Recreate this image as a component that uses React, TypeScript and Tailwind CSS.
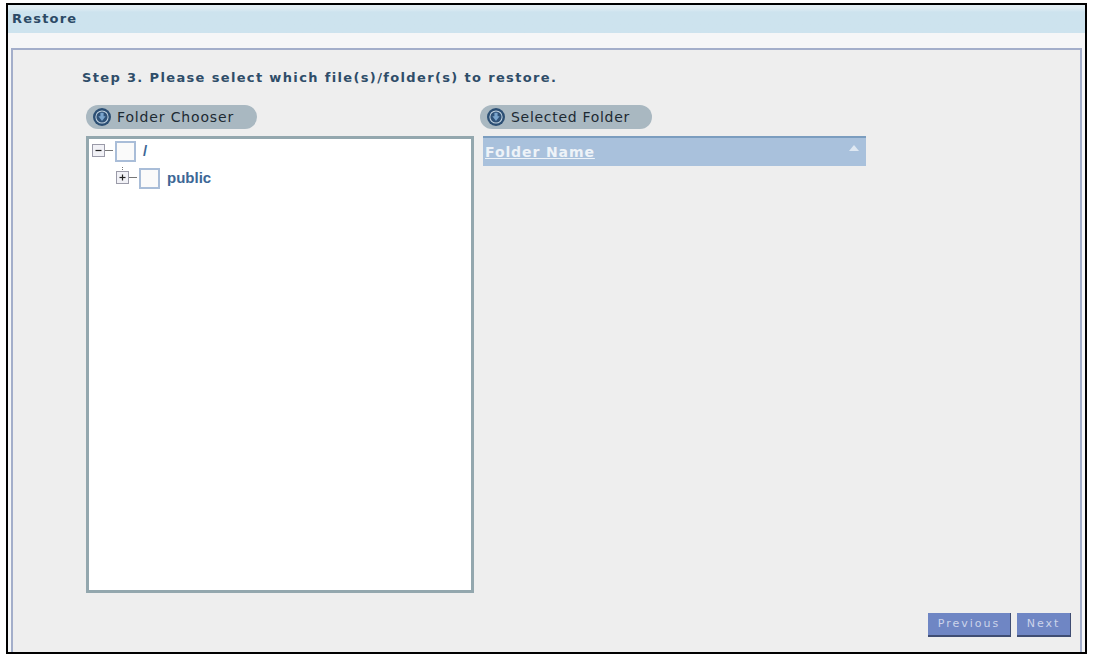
const sans = 'font-["DejaVu_Sans",Verdana,sans-serif]';

function DownCircle() {
  return (
    <svg width="18" height="18" viewBox="0 0 18 18" className="shrink-0">
      <circle cx="9" cy="9" r="9" fill="#2c4f74" />
      <circle cx="9" cy="9" r="6.6" fill="#c3d4e2" />
      <circle cx="9" cy="9" r="5.6" fill="#2f5278" />
      <path d="M7.4 4.8h3.2v3.4h2L9 13 5.400 8.200h2z" fill="#7aa5cd" />
    </svg>
  );
}

function Pill({ label, className, tracking }: { label: string; className: string; tracking: string }) {
  return (
    <div className={`h-6 rounded-full bg-[#a9b8c1] flex items-center pl-[7px] gap-[6px] ${className}`}>
      <DownCircle />
      <span className={`${sans} text-[14px] text-[#1d2a33] ${tracking}`}>{label}</span>
    </div>
  );
}

function ExpandBox({ sign }: { sign: '-' | '+' }) {
  return (
    <svg width="23" height="13" viewBox="0 0 23 13" className="shrink-0 overflow-visible mb-[3px]">
      {sign === '+' && <path d="M6.5 -4V0" stroke="#777" strokeDasharray="1 1" />}
      <rect x="0.5" y="0.5" width="12" height="12" fill="#f1f1f6" stroke="#9a9aa8" />
      <path d="M3.5 6.500h6" stroke="#222" strokeWidth="1.2" />
      {sign === '+' && <path d="M6.5 3.5v6" stroke="#222" strokeWidth="1.2" />}
      <path d="M13 6.500h8" stroke="#777" />
    </svg>
  );
}

function Check() {
  return <div className="w-[21px] h-[21px] shrink-0 border-2 border-[#a9bdd8] bg-[#fafafa]" />;
}

function TreeRow({ sign, label, className }: { sign: '-' | '+'; label: string; className: string }) {
  return (
    <div className={`flex items-center h-[25px] ${className}`}>
      <ExpandBox sign={sign} />
      <Check />
      <span className='font-["Liberation_Sans",Arial,sans-serif] font-bold text-[15px] text-[#3d6796] ml-[7px] mb-[1px]'>{label}</span>
    </div>
  );
}

export default function App() {
  return (
    <div className="w-[1093px] h-[656px] bg-white pt-[3px] pl-[6px] pr-[6px] pb-[2px]">
      <div className="h-full border-2 border-black bg-[#f5f6f7] flex flex-col">
        <div className={`${sans} h-[28px] shrink-0 bg-linear-to-b from-[#e2eef4] from-10% to-[#cde3ee] to-25% pl-[4px] flex items-center font-bold text-[13px] tracking-[1.2px] text-[#2c4a66]`}>
          Restore
        </div>
        <div className="h-[15px] shrink-0" />
        <div className="flex-1 ml-[3px] mr-[3px] border-t-2 border-x-2 border-[#a3aeca] bg-[#eeeeee] flex flex-col pl-[69px] pr-[9px] min-h-0">
          <div className={`${sans} font-bold text-[13px] tracking-[1.35px] leading-[16px] text-[#2f4d69] mt-[20px]`}>
            Step 3. Please select which file(s)/folder(s) to restore.
          </div>
          <div className="flex mt-[19px] ml-[4px]">
            <div className="w-[388px] shrink-0 flex flex-col">
              <Pill label="Folder Chooser" className="w-[171px]" tracking="tracking-[0.85px]" />
              <div className="mt-[7px] h-[457px] border-[3px] border-[#93a7ae] bg-white pl-[3px]">
                <TreeRow sign="-" label="/" className="" />
                <TreeRow sign="+" label="public" className="ml-[24px] mt-[2px]" />
              </div>
            </div>
            <div className="ml-[6px] flex-1 flex flex-col">
              <Pill label="Selected Folder" className="w-[172px]" tracking="tracking-[0.7px]" />
              <div className="mt-[7px] ml-[3px] w-[383px] h-[30px] border-t-2 border-[#7b9dbf] bg-[#a9c1dc] flex items-center justify-between pl-[2px] pr-[7px]">
                <span className={`${sans} font-bold text-[14px] tracking-[0.9px] underline text-[#eef3f8]`}>Folder Name</span>
                <svg width="10" height="6" viewBox="0 0 10 6" className="mb-[8px]">
                  <path d="M5 0l5 6H0z" fill="#dfe8f2" />
                </svg>
              </div>
            </div>
          </div>
          <div className="flex justify-end gap-[6px] mt-[20px]">
            <button className={`${sans} w-[83px] h-6 bg-[#6f86c4] border-b-2 border-r border-[#3f4d73] text-[11px] tracking-[2px] text-[#ccd4ea]`}>Previous</button>
            <button className={`${sans} w-[54px] h-6 bg-[#6f86c4] border-b-2 border-r border-[#3f4d73] text-[11px] tracking-[2px] text-[#ccd4ea]`}>Next</button>
          </div>
        </div>
      </div>
    </div>
  );
}
